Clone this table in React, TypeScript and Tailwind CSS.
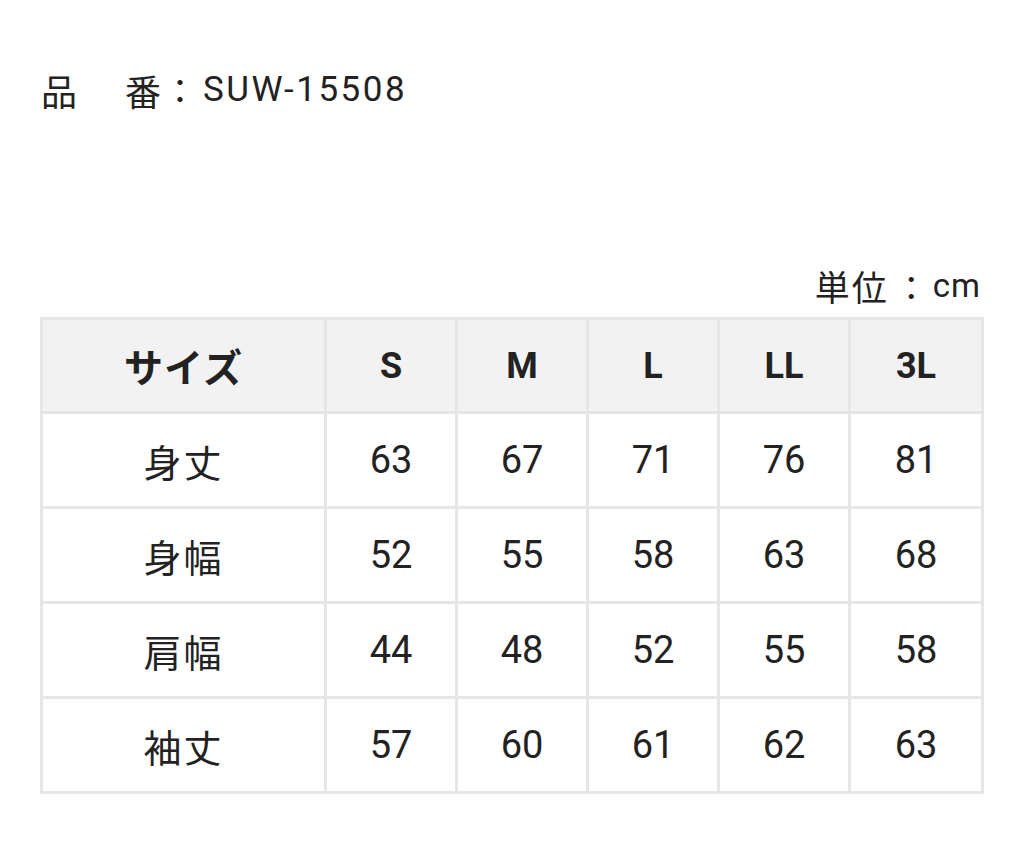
import React from 'react';

const sizes = ['S', 'M', 'L', 'LL', '3L'];

const rows: { label: string; values: number[] }[] = [
  { label: '身丈', values: [63, 67, 71, 76, 81] },
  { label: '身幅', values: [52, 55, 58, 63, 68] },
  { label: '肩幅', values: [44, 48, 52, 55, 58] },
  { label: '袖丈', values: [57, 60, 61, 62, 63] },
];

const cjk = "font-['Noto_Sans_CJK_JP',sans-serif]";
const num = "font-['Roboto','Noto_Sans_CJK_JP',sans-serif]";

export default function App() {
  return (
    <div className={`w-[1024px] h-[866px] bg-white text-[#222] ${cjk}`}>
      {/* 品番 */}
      <div className="pt-[66px] pl-[41px] flex items-center text-[36px] leading-[48px]">
        <span>品</span>
        <span className="ml-[48px]">番</span>
        <span className="ml-[2px] w-[40px] text-[34px]">：</span>
        <span className={`${num} text-[35px] tracking-[2.5px]`}>SUW-15508</span>
      </div>

      {/* 単位 */}
      <div className="mt-[150px] pr-[43px] flex justify-end items-center text-[35px] leading-[44px]">
        <span className="tracking-[2px]">単位</span>
        <span className="ml-[6px] w-[38px] text-[33px]">：</span>
        <span className={`${num} text-[33px] tracking-[1px]`}>cm</span>
      </div>

      <div className="mt-[9px] pl-[40px]">
        <table className="table-fixed border-collapse w-[941px]">
          <colgroup>
            <col className="w-[284px]" />
            <col className="w-[131px]" />
            <col className="w-[131px]" />
            <col className="w-[131px]" />
            <col className="w-[131px]" />
            <col className="w-[133px]" />
          </colgroup>
          <thead>
            <tr className="h-[94px] bg-[#f2f2f2]">
              <th className="border-[3px] border-[#e6e6e6] text-[39px] font-bold tracking-[1px]">サイズ</th>
              {sizes.map((s) => (
                <th key={s} className={`border-[3px] border-[#e6e6e6] text-[36px] font-bold ${num}`}>
                  {s}
                </th>
              ))}
            </tr>
          </thead>
          <tbody>
            {rows.map((r) => (
              <tr key={r.label} className="h-[95px]">
                <td className="border-[3px] border-[#e6e6e6] text-center text-[38px] tracking-[2px]">{r.label}</td>
                {r.values.map((v, i) => (
                  <td key={i} className={`border-[3px] border-[#e6e6e6] text-center text-[38px] ${num}`}>
                    {v}
                  </td>
                ))}
              </tr>
            ))}
          </tbody>
        </table>
      </div>
    </div>
  );
}
